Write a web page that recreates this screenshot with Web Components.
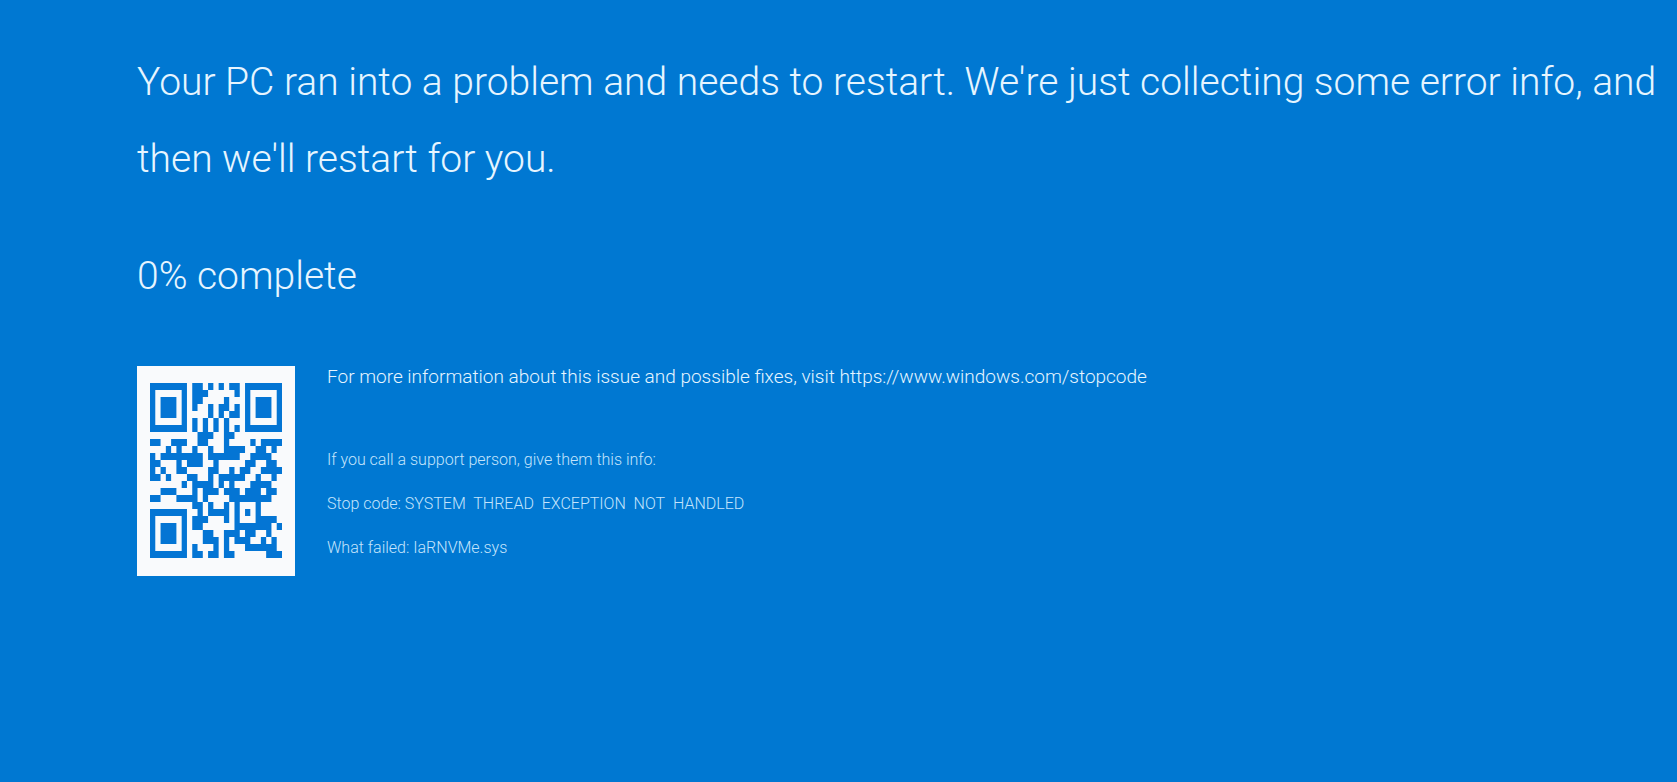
<!DOCTYPE html>
<html lang="en">
<head>
<meta charset="utf-8">
<meta name="viewport" content="width=device-width, initial-scale=1">
<title>Your PC ran into a problem</title>
<style>
  body { margin: 0; min-height: 100vh; background: #0078d2; }
  stop-info a { color: inherit; text-decoration: none; }
</style>
</head>
<body>
<stop-screen>
  <span slot="message">Your PC ran into a problem and needs to restart. We're just collecting some error info, and then we'll restart for you.</span>
  <stop-progress slot="progress" value="0"></stop-progress>
  <stop-qr slot="code"></stop-qr>
  <stop-info slot="info">
    <span slot="more">For more information about this issue and possible fixes, visit <a href="https://www.windows.com/stopcode">https://www.windows.com/stopcode</a></span>
    <p>If you call a support person, give them this info:</p>
    <p>Stop code: SYSTEM&nbsp; THREAD&nbsp; EXCEPTION&nbsp; NOT&nbsp; HANDLED</p>
    <p>What failed: IaRNVMe.sys</p>
  </stop-info>
</stop-screen>

<template id="screen">
  <style>
    :host {
      display: block;
      box-sizing: border-box;
      padding: 44px 8px 42px 137px;
      color: #e6f5ff;
      font-family: Roboto, "Open Sans", sans-serif;
      font-weight: 300;
    }
    h1 { margin: 0 0 40px; font-size: 39px; line-height: 77px; font-weight: 300; }
    .details { display: flex; align-items: flex-start; gap: 32px; margin-top: 51px; }
  </style>
  <main>
    <h1><slot name="message"></slot></h1>
    <slot name="progress"></slot>
    <div class="details"><slot name="code"></slot><slot name="info"></slot></div>
  </main>
</template>

<template id="progress">
  <style>
    :host { display: block; font-size: 39px; line-height: 77px; }
  </style>
  <span role="status"></span>
</template>

<template id="info">
  <style>
    :host { display: block; flex: 1; min-width: 0; }
    .more { font-size: 19px; line-height: 22px; margin: 0 0 50px; }
    .support { font-size: 16px; line-height: 44px; color: #c4e4fc; }
    ::slotted(p) { margin: 0; }
  </style>
  <p class="more"><slot name="more"></slot></p>
  <div class="support"><slot></slot></div>
</template>

<template id="qr">
  <style>
    :host {
      display: block;
      flex: none;
      padding: 17px 13px 18px;
      background: #f9fafc;
    }
    svg { display: block; width: 132px; height: 175px; fill: #0475d4; }
  </style>
  <svg viewBox="0 0 25 25" preserveAspectRatio="none" role="img" aria-label="QR code for the stop code page"><path/></svg>
</template>

<script>
const shadow = (host, id) => {
  const root = host.attachShadow({ mode: "open" });
  root.append(document.getElementById(id).content.cloneNode(true));
  return root;
};

customElements.define("stop-screen", class extends HTMLElement {
  constructor() { super(); shadow(this, "screen"); }
});

customElements.define("stop-info", class extends HTMLElement {
  constructor() { super(); shadow(this, "info"); }
});

customElements.define("stop-progress", class extends HTMLElement {
  constructor() { super(); shadow(this, "progress"); }
  connectedCallback() {
    this.shadowRoot.querySelector("span").textContent = `${this.getAttribute("value") || 0}% complete`;
  }
});

/* One string per row of modules, # for a dark one. */
const MODULES = [
  "#######.##.#.#.##.#######",
  "#.....#.###.....#.#.....#",
  "#.###.#.##....#...#.###.#",
  "#.###.#.#..#.##.#.#.###.#",
  "#.###.#....#.#.##.#.###.#",
  "#.....#.#.#.#.#...#.....#",
  "#######.#.#.#.#.#.#######",
  ".........###..##.........",
  "##..###..##...#....#.####",
  "...#.#..#..#..####..##.#.",
  "#.########.######..####..",
  "##...#.###..#.....##..##.",
  "#.#..##....##..#.##..####",
  "##.#...##..#.#####..#..#.",
  "......#.####.#.#...####..",
  "..###...#.###.###.###.##.",
  "##...####.#....########..",
  "........##.#..#.#...#....",
  "#######..#.####.#.#.#....",
  "#.....#.###...#.#...####.",
  "#.###.#.##......#######.#",
  "#.###.#...##..###.##..#..",
  "#.###.#...###.#.###..#.#.",
  "#.....#.#...#.#...######.",
  "#######.##.##.##......###"
];

customElements.define("stop-qr", class extends HTMLElement {
  constructor() {
    super();
    const d = MODULES.map((row, y) =>
      [...row.matchAll(/#+/g)].map(m => `M${m.index} ${y}h${m[0].length}v1h-${m[0].length}z`).join("")
    ).join("");
    shadow(this, "qr").querySelector("path").setAttribute("d", d);
  }
});
</script>
</body>
</html>
